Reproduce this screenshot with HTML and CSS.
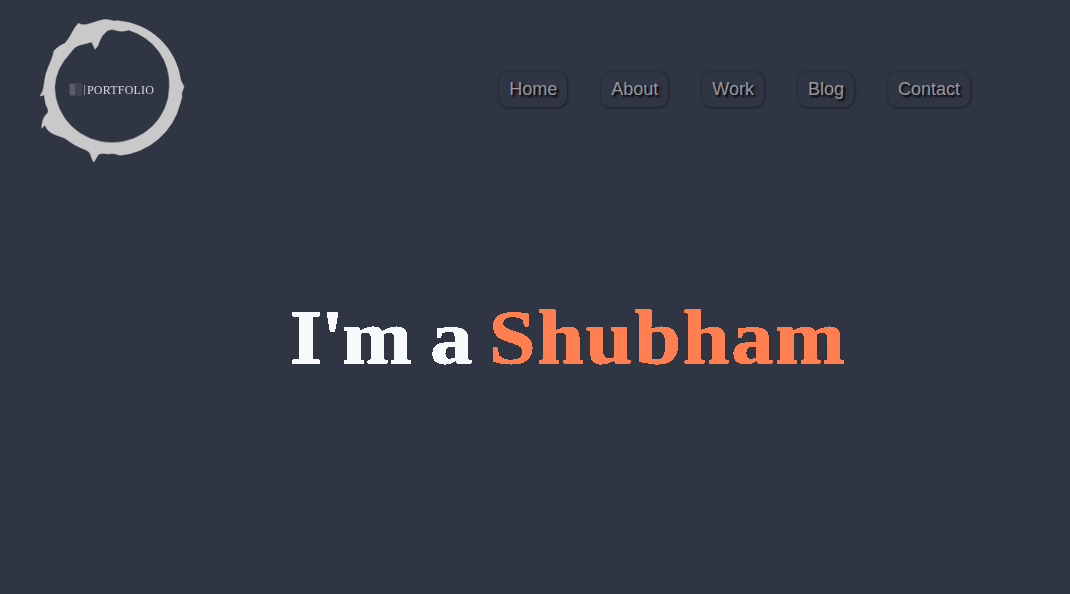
FILE: index.html
```html
<!DOCTYPE html>
<html lang="en">
<head>
<meta charset="utf-8">
<title>Portfolio</title>
<link rel="stylesheet" href="styles.css">
</head>
<body>
<svg class="defs" width="0" height="0" aria-hidden="true">
  <filter id="crisp" color-interpolation-filters="sRGB" x="-5%" y="-5%" width="110%" height="110%">
    <feComponentTransfer>
      <feFuncA type="discrete" tableValues="0 1"/>
    </feComponentTransfer>
  </filter>
</svg>
<header class="header">
  <a class="logo" href="#">
    <svg width="165" height="160" viewBox="0 0 165 160">
      <g transform="scale(0.33333)">
        <path class="ring" fill-rule="evenodd" d="M145 40 Q155 46 168 44 Q190 38 205 33 Q225 26 240 30 Q250 34 262 32 A205 205 0 0 1 452 210 L462 230 L455 250 L456 262 L450 282 A205 205 0 0 1 270 436 Q250 428 235 432 Q212 428 205 434 Q198 445 192 456 Q186 450 184 440 Q180 425 168 420 A205 205 0 0 1 105 385 L70 372 Q48 360 45 345 L35 355 Q36 325 50 312 Q60 305 48 285 Q44 270 43 255 L30 258 Q40 245 42 225 Q45 190 60 160 Q70 135 72 122 Q90 105 105 100 Q118 85 125 70 Q135 50 145 40 Z M120 130 Q135 108 150 105 Q170 100 185 96 L195 118 Q205 110 207 98 Q212 78 232 62 Q245 55 262 62 Q280 66 296 60 A172 168 0 0 1 418 230 A172 168 0 0 1 246 398 A172 168 0 0 1 74 230 Q77 175 120 130 Z"/>
      </g>
      <rect class="mark" x="39" y="73" width="13" height="13" rx="1"/>
      <rect class="mark-inner" x="40" y="74" width="5" height="11"/>
      <rect class="mark-bar" x="54" y="75" width="1" height="10"/>
      <text class="logo-text" x="57" y="84">PORTFOLIO</text>
    </svg>
  </a>
  <nav class="nav">
    <a class="nav-link" href="#">Home</a>
    <a class="nav-link" href="#">About</a>
    <a class="nav-link" href="#">Work</a>
    <a class="nav-link" href="#">Blog</a>
    <a class="nav-link" href="#">Contact</a>
  </nav>
</header>
<main class="hero">
  <h1 class="title"><span class="lead">I'm</span> a <span class="accent">Shubham</span></h1>
</main>
</body>
</html>
```

FILE: styles.css
```css
* { box-sizing: border-box; }
html, body { height: 100%; }
body {
  margin: 0;
  background: #2f3542;
  overflow: hidden;
}
.defs { display: block; height: 0; }
.header {
  display: flex;
  align-items: flex-start;
  padding: 10px 100px 0 30px;
}
.logo { display: block; flex: none; height: 160px; }
.logo svg { display: block; filter: blur(0.35px); }
.ring { fill: #c9c9c9; stroke: #c9c9c9; stroke-width: 1.5; stroke-linejoin: round; }
.mark { fill: #3f4450; }
.mark-inner { fill: #5a5e68; }
.mark-bar { fill: #8b8d94; }
.logo-text {
  font-family: "Liberation Serif", serif;
  font-size: 12px;
  letter-spacing: 0.2px;
  fill: #d6d6d8;
}
.nav {
  display: flex;
  gap: 34px;
  margin-left: auto;
  margin-top: 62px;
}
.nav-link {
  display: block;
  padding: 6px 10px;
  font-family: "Liberation Sans", Arial, sans-serif;
  font-size: 18px;
  line-height: 23px;
  color: #96969e;
  text-decoration: none;
  text-shadow: 2px 2px 2px #000;
  border-radius: 10px;
  box-shadow: 1px 1px 3px rgba(0, 0, 0, 0.3), 0 0 3px rgba(0, 0, 0, 0.25);
}
.hero {
  display: flex;
  justify-content: center;
  padding: 121px 0 0 66px;
}
.title {
  margin: 0;
  font-family: "Liberation Serif", serif;
  font-size: 76px;
  font-weight: bold;
  line-height: 92px;
  word-spacing: -1px;
  color: #f8f9fa;
  -webkit-text-stroke: 1px currentColor;
  transform: scaleX(1.108);
  filter: url(#crisp);
}
.lead { letter-spacing: -1.8px; }
.accent {
  margin-left: -3px;
  letter-spacing: 1.5px;
  color: #ff7f50;
}
```
